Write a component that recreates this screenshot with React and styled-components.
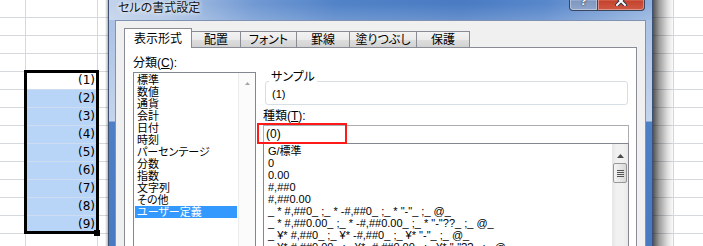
import React from 'react';
import styled, { createGlobalStyle } from 'styled-components';

const UI_FONT = `"Liberation Sans", "Noto Sans CJK JP", sans-serif`;

const GlobalStyle = createGlobalStyle`
  html, body { margin: 0; padding: 0; background: #ffffff; }
  body {
    overflow: hidden;
    font-family: ${UI_FONT};
    font-feature-settings: "palt";
    color: #000;
  }
  #root { width: 703px; height: 246px; }
`;

/* ---------- spreadsheet ---------- */
const Sheet = styled.div`
  position: relative;
  width: 703px;
  height: 246px;
  overflow: hidden;
  box-sizing: border-box;
  padding: 71px 0 0 25px;
  background-color: #fff;
  background-image:
    linear-gradient(to right, #d5d8dc 1px, transparent 1px),
    linear-gradient(to bottom, #d5d8dc 1px, transparent 1px);
  background-size: 72px 18px;
  background-position: 25px 17px;
`;

const CellColumn = styled.div`
  position: relative;
  width: 72px;
  &::after {
    content: '';
    position: absolute;
    left: -1px;
    right: -2px;
    top: -1px;
    bottom: -1px;
    border: 3px solid #000;
    pointer-events: none;
  }
`;

const Cell = styled.div`
  box-sizing: border-box;
  height: 18px;
  border-top: 1px solid ${(p) => (p.$selected ? '#cddcef' : '#d5d8dc')};
  background: ${(p) => (p.$selected ? '#b8d5f8' : '#ffffff')};
  padding-right: 2px;
  text-align: right;
  font: 12px/17px "DejaVu Sans", sans-serif;
  color: #000;
`;

const FillHandle = styled.div`
  position: absolute;
  right: -3px;
  bottom: -3px;
  width: 6px;
  height: 6px;
  background: #000;
  z-index: 2;
`;

/* ---------- dialog window ---------- */
const Window = styled.div`
  position: absolute;
  left: 108px;
  top: -10px;
  width: 545px;
  height: 290px;
  box-sizing: border-box;
  border: 1px solid #3d5272;
  border-radius: 6px 6px 0 0;
  display: flex;
  flex-direction: column;
  background: linear-gradient(
    to bottom,
    #a4bde2 0px,
    #c5d4ec 130px,
    #4f80c6 131px,
    #4878c0 100%
  );
  &::after {
    content: '';
    position: absolute;
    top: -1px;
    bottom: 0;
    left: calc(100% + 1px);
    width: 21px;
    background: linear-gradient(
      to right,
      rgba(0, 0, 0, 0.68),
      rgba(0, 0, 0, 0.38) 30%,
      rgba(0, 0, 0, 0.12) 70%,
      rgba(0, 0, 0, 0)
    );
  }
  &::before {
    content: '';
    position: absolute;
    top: -1px;
    bottom: 0;
    right: calc(100% + 1px);
    width: 3px;
    background: linear-gradient(to left, rgba(0, 0, 0, 0.28), rgba(0, 0, 0, 0));
  }
`;

const TitleBar = styled.div`
  height: 29px;
  flex: none;
  display: flex;
  justify-content: space-between;
  align-items: flex-start;
  padding: 0 7px 0 9px;
  background:
    linear-gradient(to bottom, rgba(255, 255, 255, 0) 45%, rgba(255, 255, 255, 0.16) 100%),
    linear-gradient(
      100deg,
      #c3d3ea 0%,
      #a9c1e3 12%,
      #7199d3 27%,
      #5283c8 42%,
      #4a7bc3 65%,
      #5887cb 80%,
      #92b2de 100%
    );
  border-radius: 5px 5px 0 0;
`;

const Title = styled.div`
  align-self: flex-end;
  margin-bottom: 5px;
  font-size: 12px;
  line-height: 14px;
  color: #151515;
  text-shadow: 0 0 4px #ffffff, 0 0 7px rgba(255, 255, 255, 0.8);
`;

const CaptionButtons = styled.div`
  display: flex;
`;

const CaptionButton = styled.div`
  box-sizing: border-box;
  width: ${(p) => p.$w}px;
  height: 20px;
  border: 1px solid #3b465c;
  border-top: none;
  margin-left: -1px;
  display: flex;
  align-items: center;
  justify-content: center;
  border-radius: ${(p) => (p.$pos === 'left' ? '0 0 0 4px' : '0 0 4px 0')};
  background: ${(p) =>
    p.$kind === 'close'
      ? 'linear-gradient(to bottom, #e7a796 0%, #d7735e 45%, #c5432f 55%, #cf5a44 100%)'
      : 'linear-gradient(to bottom, #c5d2e6 0%, #a6b8d6 45%, #8199c0 55%, #90a6cb 100%)'};
  box-shadow: inset 0 0 0 1px rgba(255, 255, 255, 0.35);
  color: #fff;
  font: bold 13px/14px "Liberation Sans", sans-serif;
  text-shadow: 0 0 1px #2a3142, 0 0 2px #2a3142;
`;

const Body = styled.div`
  flex: 1;
  margin: 0 6px;
  border: 1px solid #8092b1;
  border-bottom: none;
  background: #f0f0f0;
  padding: 7px 8px 0 8px;
`;

const TabStrip = styled.div`
  display: flex;
  align-items: flex-end;
  height: 20px;
  position: relative;
  z-index: 1;
`;

const Tab = styled.div`
  box-sizing: border-box;
  width: ${(p) => p.$w}px;
  height: ${(p) => (p.$active ? 20 : 16)}px;
  margin-bottom: ${(p) => (p.$active ? 0 : 1)}px;
  margin-left: ${(p) => (p.$first ? 0 : -1)}px;
  border: 1px solid #898c95;
  border-bottom: none;
  background: ${(p) =>
    p.$active
      ? '#ffffff'
      : 'linear-gradient(to bottom, #f3f3f3 0%, #ebebeb 50%, #dedede 51%, #d2d2d2 100%)'};
  display: flex;
  align-items: center;
  justify-content: center;
  font-size: 12px;
  line-height: 14px;
  white-space: nowrap;
  position: relative;
  z-index: ${(p) => (p.$active ? 1 : 0)};
`;

const Panel = styled.div`
  margin-top: -1px;
  height: 230px;
  border: 1px solid #898c95;
  background: #ffffff;
  display: grid;
  grid-template-columns: 123px 366px;
  column-gap: 7px;
  align-items: start;
  padding: 8px 7px 0 8px;
`;

const Column = styled.div`
  display: flex;
  flex-direction: column;
`;

const FieldLabel = styled.div`
  font-size: 12px;
  line-height: 14px;
  margin-top: ${(p) => p.$mt || 0}px;
  white-space: nowrap;
  u { text-decoration-thickness: 1px; text-underline-offset: 1px; }
`;

/* category list */
const CategoryBox = styled.div`
  margin-top: 2px;
  height: 200px;
  border: 1px solid #828790;
  display: flex;
`;

const CategoryItems = styled.div`
  flex: 1;
  padding: 1px 1px 0 1px;
`;

const CategoryItem = styled.div`
  height: 12px;
  line-height: 12px;
  font-size: 11px;
  padding-left: 2px;
  white-space: nowrap;
  background: ${(p) => (p.$selected ? '#3399ff' : 'transparent')};
  color: ${(p) => (p.$selected ? '#ffffff' : '#000000')};
`;

const LightScroll = styled.div`
  width: 17px;
  flex: none;
  background: #fbfbfb;
  border-left: 1px solid #ececec;
  display: flex;
  justify-content: center;
  padding-top: 9px;
  box-sizing: border-box;
`;

/* sample group */
const SampleGroup = styled.div`
  position: relative;
  box-sizing: border-box;
  height: 24px;
  margin: 25px 1px 0 2px;
  border: 1px solid #d5dfe5;
  border-radius: 3px;
  padding: 6px 0 0 6px;
`;

const Legend = styled.div`
  position: absolute;
  top: -12px;
  left: 3px;
  padding: 0 2px;
  background: #ffffff;
  font-size: 12px;
  line-height: 14px;
`;

const SampleValue = styled.div`
  font-size: 11px;
  line-height: 13px;
`;

/* type input */
const TypeField = styled.div`
  position: relative;
  z-index: 2;
  margin-top: 2px;
`;

const TypeInput = styled.div`
  box-sizing: border-box;
  height: 18px;
  border: 1px solid #abadb3;
  border-bottom: none;
  padding-left: 2px;
  font-size: 12px;
  line-height: 17px;
`;

const Annotation = styled.div`
  position: absolute;
  left: -6px;
  top: -2px;
  width: 90px;
  height: 21px;
  box-sizing: border-box;
  border: 2px solid #ff1a1a;
  pointer-events: none;
`;

/* format list */
const FormatList = styled.div`
  height: 130px;
  border: 1px solid #828790;
  display: flex;
`;

const FormatItems = styled.div`
  flex: 1;
  overflow: hidden;
  padding: 1px 0 0 4px;
`;

const FormatItem = styled.div`
  height: 12px;
  line-height: 12px;
  font-size: 11px;
  white-space: pre;
`;

const VScroll = styled.div`
  width: 16px;
  flex: none;
  background: linear-gradient(to right, #e6e6e6, #f1f1f1 30%, #f1f1f1 70%, #e9e9e9);
  display: flex;
  flex-direction: column;
  align-items: center;
`;

const ScrollArrow = styled.div`
  height: 17px;
  width: 100%;
  display: flex;
  justify-content: center;
  align-items: flex-start;
  padding-top: 10px;
  box-sizing: border-box;
`;

const Thumb = styled.div`
  box-sizing: border-box;
  margin-top: 2px;
  width: 14px;
  height: 20px;
  border: 1px solid #979797;
  border-radius: 2px;
  background: linear-gradient(to right, #f4f4f4, #e8e8e8 50%, #d8d8d8);
  display: flex;
  align-items: center;
  justify-content: center;
`;

const categories = [
  '標準', '数値', '通貨', '会計', '日付', '時刻', 'パーセンテージ',
  '分数', '指数', '文字列', 'その他', 'ユーザー定義',
];

const formats = [
  'G/標準',
  '0',
  '0.00',
  '#,##0',
  '#,##0.00',
  '_ * #,##0_ ;_ * -#,##0_ ;_ * "-"_ ;_ @_',
  '_ * #,##0.00_ ;_ * -#,##0.00_ ;_ * "-"??_ ;_ @_',
  '_ ¥* #,##0_ ;_ ¥* -#,##0_ ;_ ¥* "-"_ ;_ @_',
  '_ ¥* #,##0.00_ ;_ ¥* -#,##0.00_ ;_ ¥* "-"??_ ;_ @_',
  '#,##0;-#,##0',
];

const tabs = [
  ['表示形式', 68],
  ['配置', 50],
  ['フォント', 57],
  ['罫線', 54],
  ['塗りつぶし', 68],
  ['保護', 54],
];

const CloseGlyph = () => (
  <svg width="12" height="10" viewBox="0 0 12 10">
    <path d="M2 1 L10 9 M10 1 L2 9" stroke="#2d3446" strokeWidth="4" strokeLinecap="square" />
    <path d="M2 1 L10 9 M10 1 L2 9" stroke="#ffffff" strokeWidth="2" strokeLinecap="square" />
  </svg>
);

const UpArrow = ({ color, w = 7, h = 4 }) => (
  <svg width={w} height={h} viewBox={`0 0 ${w} ${h}`}>
    <polygon points={`0,${h} ${w / 2},0 ${w},${h}`} fill={color} />
  </svg>
);

const Grip = () => (
  <svg width="7" height="7" viewBox="0 0 7 7">
    {[0, 2, 4, 6].map((y) => (
      <rect key={y} x="0" y={y} width="7" height="1" fill="#555" />
    ))}
  </svg>
);

export default function App() {
  return (
    <>
      <GlobalStyle />
      <Sheet>
        <CellColumn>
          {Array.from({ length: 9 }, (_, i) => (
            <Cell key={i} $selected={i > 0}>
              ({i + 1})
            </Cell>
          ))}
          <FillHandle />
        </CellColumn>

        <Window>
          <TitleBar>
            <Title>セルの書式設定</Title>
            <CaptionButtons>
              <CaptionButton $w={29} $pos="left" $kind="help">?</CaptionButton>
              <CaptionButton $w={48} $pos="right" $kind="close">
                <CloseGlyph />
              </CaptionButton>
            </CaptionButtons>
          </TitleBar>
          <Body>
            <TabStrip>
              {tabs.map(([label, w], i) => (
                <Tab key={label} $w={w} $active={i === 0} $first={i === 0}>
                  {label}
                </Tab>
              ))}
            </TabStrip>
            <Panel>
              <Column>
                <FieldLabel>
                  分類(<u>C</u>):
                </FieldLabel>
                <CategoryBox>
                  <CategoryItems>
                    {categories.map((c, i) => (
                      <CategoryItem key={c} $selected={i === categories.length - 1}>
                        {c}
                      </CategoryItem>
                    ))}
                  </CategoryItems>
                  <LightScroll>
                    <UpArrow color="#a6a6a6" w={5} h={3} />
                  </LightScroll>
                </CategoryBox>
              </Column>
              <Column>
                <SampleGroup>
                  <Legend>サンプル</Legend>
                  <SampleValue>(1)</SampleValue>
                </SampleGroup>
                <FieldLabel $mt={4}>
                  種類(<u>T</u>):
                </FieldLabel>
                <TypeField>
                  <TypeInput>(0)</TypeInput>
                  <Annotation />
                </TypeField>
                <FormatList>
                  <FormatItems>
                    {formats.map((f) => (
                      <FormatItem key={f}>{f}</FormatItem>
                    ))}
                  </FormatItems>
                  <VScroll>
                    <ScrollArrow>
                      <UpArrow color="#4a4a4a" />
                    </ScrollArrow>
                    <Thumb>
                      <Grip />
                    </Thumb>
                  </VScroll>
                </FormatList>
              </Column>
            </Panel>
          </Body>
        </Window>
      </Sheet>
    </>
  );
}
